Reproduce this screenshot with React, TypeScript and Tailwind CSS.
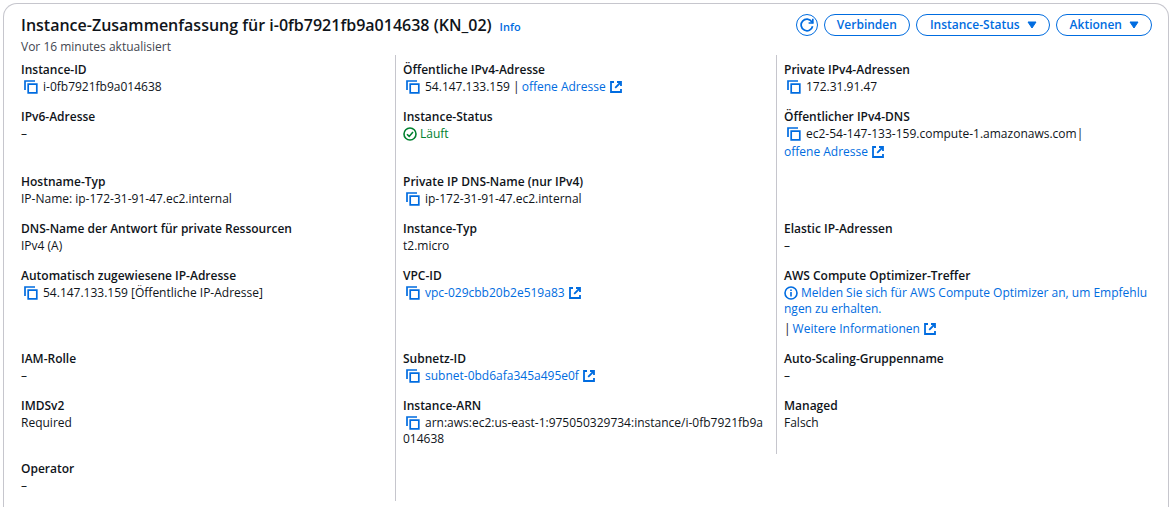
import type { ReactNode } from 'react';

function CopyButton() {
  return (
    <button type="button" aria-label="Kopieren" className="ml-[3px] mr-[5px] inline-block h-[14px] w-[14px] align-[-3px] text-[#006ce0]">
      <svg viewBox="0 0 14 14" className="block h-[14px] w-[14px]" fill="none" stroke="currentColor" strokeWidth="1.7">
        <path d="M1 10V1h10" />
        <path d="M4.2 4.2h8.6v8.6H4.2z" />
      </svg>
    </button>
  );
}

function External() {
  return (
    <svg viewBox="0 0 12 12" className="ml-1 inline-block h-3 w-3 align-[-2px]" fill="none" stroke="currentColor" strokeWidth="1.8" aria-hidden="true">
      <path d="M4 1H1v10h10V8" />
      <path d="M7 1h4v4M11 1 5.2 6.8" />
    </svg>
  );
}

function Link({ children }: { children: ReactNode }) {
  return (
    <a href="#" className="text-[#006ce0] hover:underline">
      {children}
      <External />
    </a>
  );
}

function Divider() {
  return <span className="mr-[2px]">|</span>;
}

function Caret() {
  return (
    <svg viewBox="0 0 10 8" className="h-2 w-[10px]" fill="currentColor" stroke="currentColor" strokeLinejoin="round" aria-hidden="true">
      <path d="M1 1h8L5 7z" />
    </svg>
  );
}

function Pill({ children, menu = false }: { children: ReactNode; menu?: boolean }) {
  return (
    <button type="button" className={`flex h-[22px] items-center gap-[7px] rounded-full border border-[#006ce0] font-semibold text-[#006ce0] ${menu ? 'pl-[13px] pr-3' : 'px-3'}`}>
      {children}
      {menu && <Caret />}
    </button>
  );
}

function Field({ label, column, children }: { label: string; column: 1 | 2 | 3; children: ReactNode }) {
  const place = { 1: 'col-start-1', 2: 'col-start-2 border-l border-[#c6c6cd]', 3: 'col-start-3 border-l border-[#c6c6cd]' }[column];
  return (
    <div className={`min-w-0 p-[7px] ${place}`}>
      <dt className="font-semibold">{label}</dt>
      <dd className="mt-px break-all">{children}</dd>
    </div>
  );
}

export default function App() {
  return (
    <div className="flex min-h-screen flex-col bg-white pl-[3px] pt-[3px] font-['Open_Sans','Noto_Sans',sans-serif] text-[12px] leading-4 text-[#0f141a]">
      <section className="grow rounded-t-[14px] border border-b-0 border-[#c6c6cd] pl-[10px] pr-[11px]">
        <header className="flex items-start justify-between pl-[7px] pr-[5px] pt-[10px]">
          <div>
            <h2 className="text-[16px] font-semibold leading-[22px]">
              Instance-Zusammenfassung für i-0fb7921fb9a014638 (KN_02)
              <a href="#" className="ml-2 text-[11px] text-[#006ce0]">Info</a>
            </h2>
            <p className="mt-px text-[#424650]">Vor 16 minutes aktualisiert</p>
          </div>
          <div className="flex gap-[6px]">
            <button type="button" aria-label="Aktualisieren" className="flex h-[22px] w-[22px] items-center justify-center rounded-full border border-[#006ce0] text-[#006ce0]">
              <svg viewBox="0 0 14 14" className="h-[14px] w-[14px]" fill="none" stroke="currentColor" strokeWidth="1.7">
                <path d="M12.6 8.2A5.8 5.8 0 1 1 11.8 3.8L12.8 5" />
                <path d="M12.8 .8V5H8.6" />
              </svg>
            </button>
            <Pill>Verbinden</Pill>
            <Pill menu>Instance-Status</Pill>
            <Pill menu>Aktionen</Pill>
          </div>
        </header>

        <dl className="grid grid-cols-3">
          <Field column={1} label="Instance-ID"><CopyButton />i-0fb7921fb9a014638</Field>
          <Field column={2} label="Öffentliche IPv4-Adresse"><CopyButton />54.147.133.159 <Divider /><Link>offene Adresse</Link></Field>
          <Field column={3} label="Private IPv4-Adressen"><CopyButton />172.31.91.47</Field>

          <Field column={1} label="IPv6-Adresse">–</Field>
          <Field column={2} label="Instance-Status">
            <span className="flex items-center gap-[3px] text-[#00802f]">
              <svg viewBox="0 0 14 14" className="h-[14px] w-[14px]" fill="none" stroke="currentColor" strokeWidth="1.6" aria-hidden="true">
                <circle cx="7" cy="7" r="6" />
                <path d="m4 7.2 2.2 2.2L10 5" />
              </svg>
              Läuft
            </span>
          </Field>
          <Field column={3} label="Öffentlicher IPv4-DNS">
            <CopyButton />ec2-54-147-133-159.compute-1.amazonaws.com<Divider />
            <div className="mt-[2px]"><Link>offene Adresse</Link></div>
          </Field>

          <Field column={1} label="Hostname-Typ">IP-Name: ip-172-31-91-47.ec2.internal</Field>
          <Field column={2} label="Private IP DNS-Name (nur IPv4)"><CopyButton />ip-172-31-91-47.ec2.internal</Field>
          <div className="border-l border-[#c6c6cd]" />

          <Field column={1} label="DNS-Name der Antwort für private Ressourcen">IPv4 (A)</Field>
          <Field column={2} label="Instance-Typ">t2.micro</Field>
          <Field column={3} label="Elastic IP-Adressen">–</Field>

          <Field column={1} label="Automatisch zugewiesene IP-Adresse"><CopyButton />54.147.133.159 [Öffentliche IP-Adresse]</Field>
          <Field column={2} label="VPC-ID"><CopyButton /><Link>vpc-029cbb20b2e519a83</Link></Field>
          <Field column={3} label="AWS Compute Optimizer-Treffer">
            <a href="#" className="text-[#006ce0]">
              <svg viewBox="0 0 14 14" className="mr-[3px] inline-block h-[14px] w-[14px] align-[-3px]" fill="none" stroke="currentColor" strokeWidth="1.6" aria-hidden="true">
                <circle cx="7" cy="7" r="6" />
                <path d="M7 6v4.4M7 3.4v1.6" />
              </svg>
              Melden Sie sich für AWS Compute Optimizer an, um Empfehlungen zu erhalten.
            </a>
            <div className="mt-1"><Divider /><Link>Weitere Informationen</Link></div>
          </Field>

          <Field column={1} label="IAM-Rolle">–</Field>
          <Field column={2} label="Subnetz-ID"><CopyButton /><Link>subnet-0bd6afa345a495e0f</Link></Field>
          <Field column={3} label="Auto-Scaling-Gruppenname">–</Field>

          <Field column={1} label="IMDSv2">Required</Field>
          <Field column={2} label="Instance-ARN"><CopyButton />arn:aws:ec2:us-east-1:975050329734:instance/i-0fb7921fb9a014638</Field>
          <Field column={3} label="Managed">Falsch</Field>

          <Field column={1} label="Operator">–</Field>
          <div className="border-l border-[#c6c6cd]" />
        </dl>
      </section>
    </div>
  );
}
